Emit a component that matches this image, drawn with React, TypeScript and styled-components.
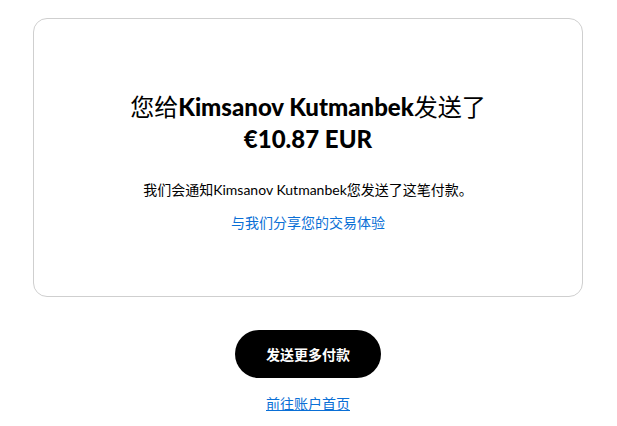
import styled, { createGlobalStyle } from "styled-components";

const GlobalStyle = createGlobalStyle`
  body {
    margin: 0;
    background: #ffffff;
    font-family: "Lato", "Noto Sans CJK SC", sans-serif;
    color: #000000;
  }
`;

const Page = styled.main`
  display: flex;
  flex-direction: column;
  align-items: flex-start;
  padding: 18px 0 0 33px;
`;

const Card = styled.section`
  width: 550px;
  height: 279px;
  box-sizing: border-box;
  border: 1px solid #cfcfcf;
  border-radius: 14px;
  padding-top: 72px;

  display: flex;
  flex-direction: column;
  align-items: center;
  text-align: center;
`;

const Title = styled.h1`
  margin: 0;
  font-size: 24px;
  line-height: 32px;
  font-weight: 400;
`;

const Strong = styled.strong`
  font-weight: 900;
`;

const Message = styled.p`
  margin: 25px 0 0;
  font-size: 14px;
  line-height: 20px;
`;

const FeedbackLink = styled.a`
  margin-top: 13px;
  font-size: 14px;
  line-height: 20px;
  color: #0a6fd6;
  text-decoration: none;
`;

const Actions = styled.div`
  width: 550px;
  margin-top: 33px;
  display: flex;
  flex-direction: column;
  align-items: center;
`;

const PrimaryButton = styled.button`
  width: 146px;
  height: 48px;
  border: none;
  border-radius: 24px;
  background: #000000;
  color: #ffffff;
  font-family: inherit;
  font-size: 14px;
  font-weight: 700;
  cursor: pointer;
`;

const HomeLink = styled.a`
  margin-top: 16px;
  font-size: 14px;
  line-height: 20px;
  color: #0a6fd6;
  text-decoration: underline;
`;

const App = () => {
  return (
    <Page>
      <GlobalStyle />
      <Card>
        <Title>
          您给<Strong>Kimsanov Kutmanbek</Strong>发送了
          <br />
          <Strong>€10.87 EUR</Strong>
        </Title>
        <Message>我们会通知Kimsanov Kutmanbek您发送了这笔付款。</Message>
        <FeedbackLink href="#">与我们分享您的交易体验</FeedbackLink>
      </Card>
      <Actions>
        <PrimaryButton>发送更多付款</PrimaryButton>
        <HomeLink href="#">前往账户首页</HomeLink>
      </Actions>
    </Page>
  );
};

export default App;
